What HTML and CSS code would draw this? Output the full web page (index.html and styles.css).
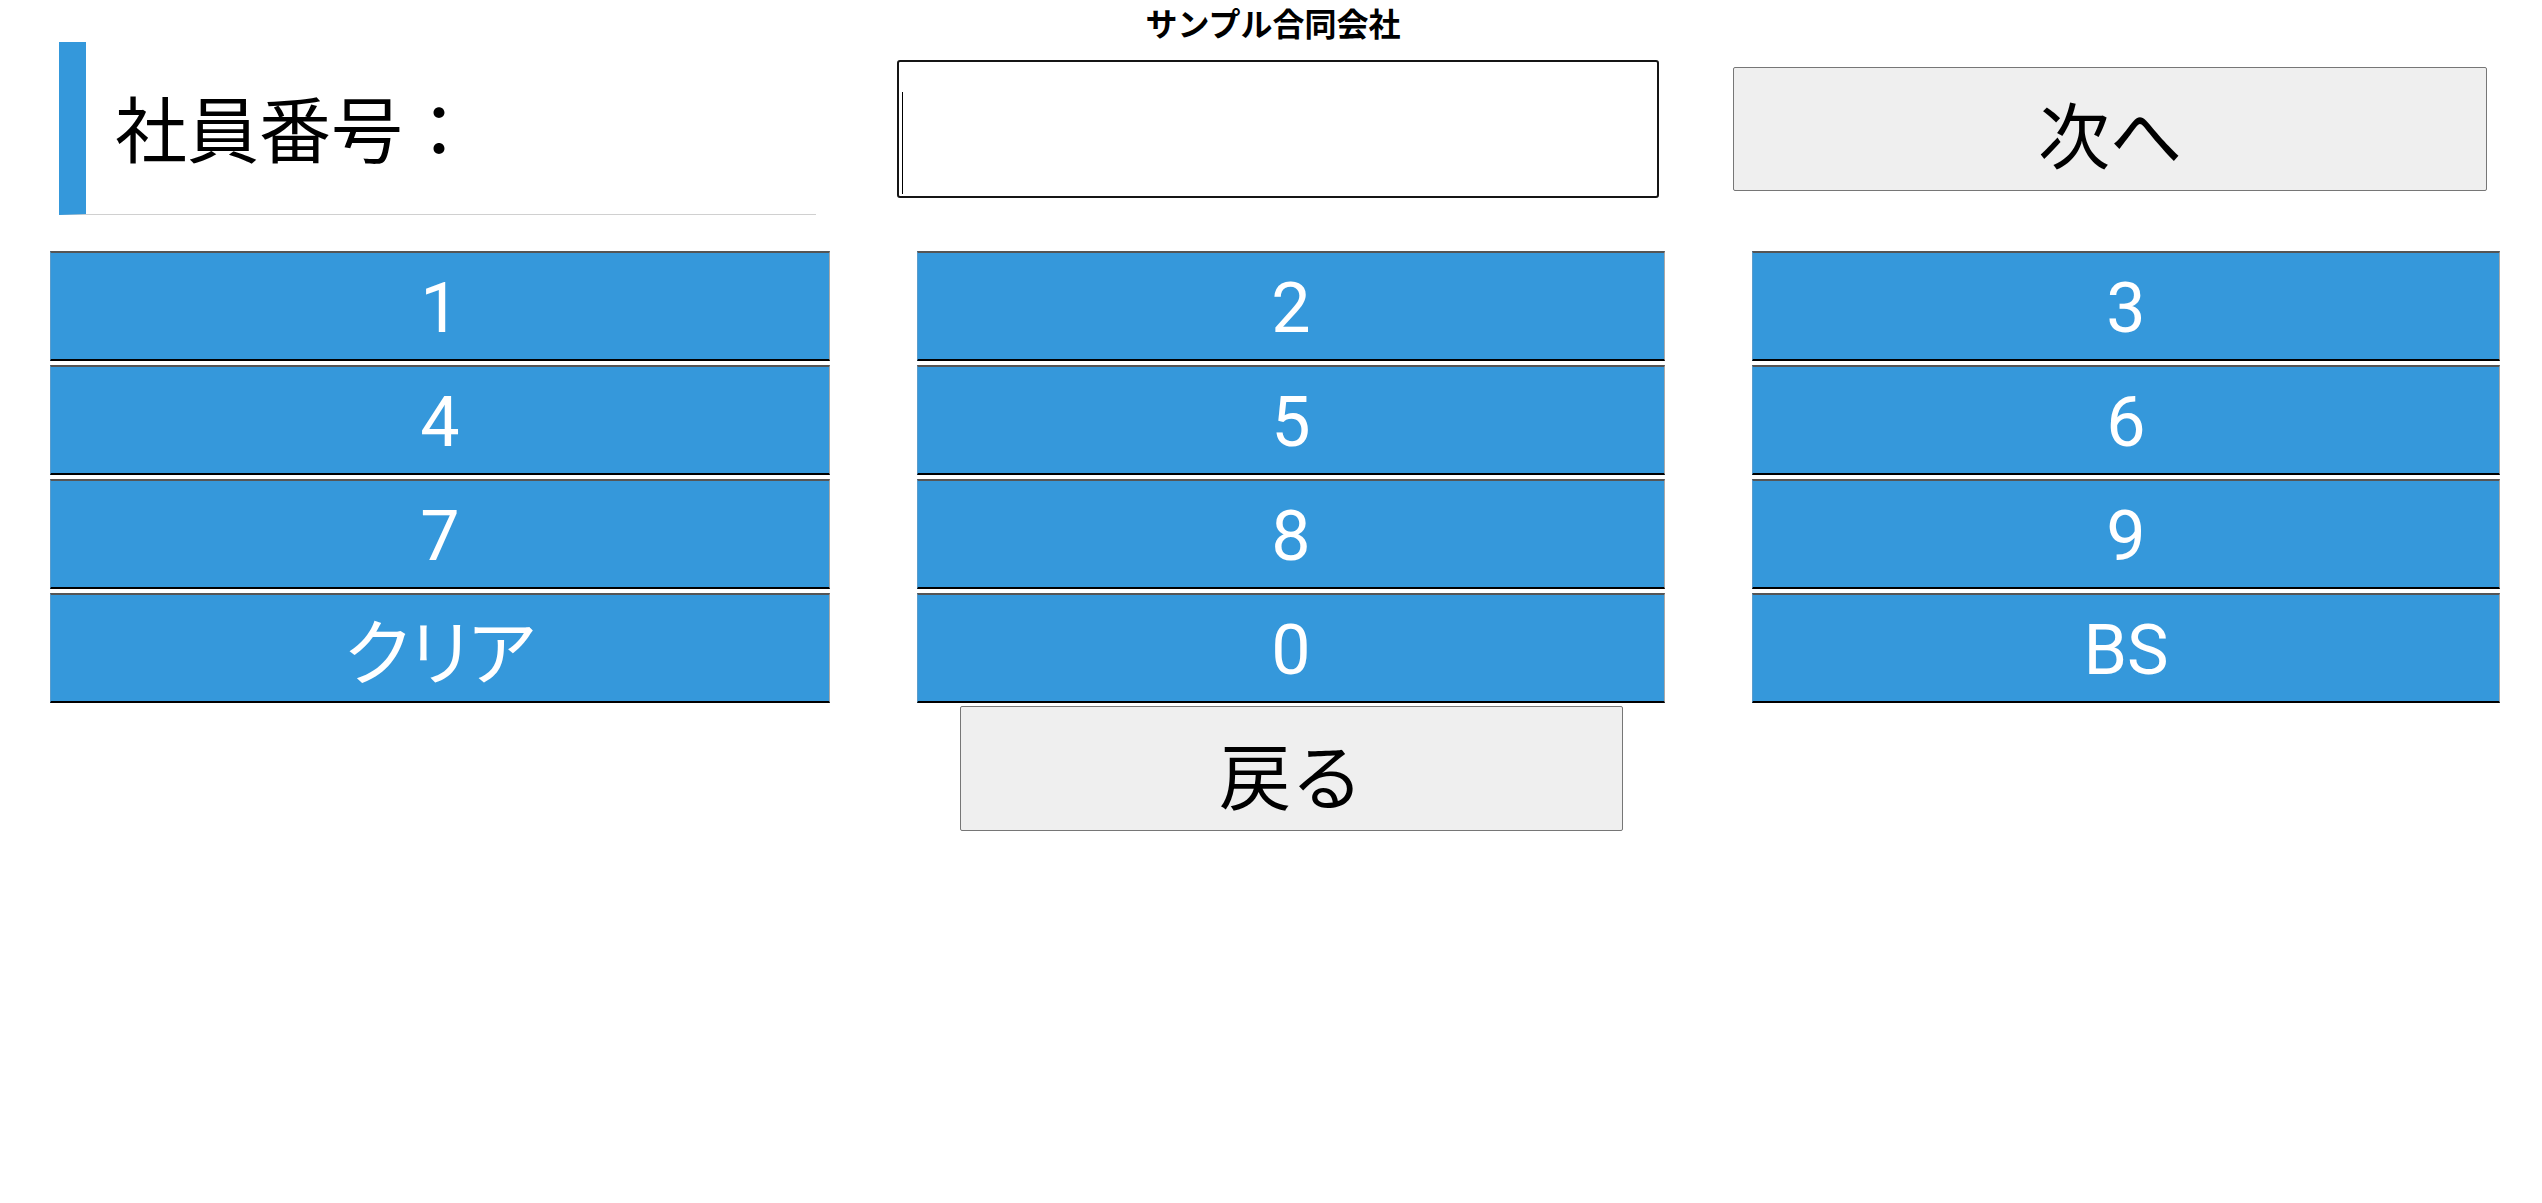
FILE: index.html
```html
<!DOCTYPE html>
<html lang="ja">
<head>
<meta charset="utf-8">
<title>社員番号</title>
<link rel="stylesheet" href="styles.css">
</head>
<body>
<div class="page">
  <div class="company">サンプル合同会社</div>
  <div class="header">
    <div class="label">社員番号：</div>
    <div class="field">
      <input class="code" type="text" value="">
      <span class="caret"></span>
    </div>
    <button class="btn next" type="button">次へ</button>
  </div>
  <div class="keypad">
    <button class="key" type="button">1</button>
    <button class="key" type="button">2</button>
    <button class="key" type="button">3</button>
    <button class="key" type="button">4</button>
    <button class="key" type="button">5</button>
    <button class="key" type="button">6</button>
    <button class="key" type="button">7</button>
    <button class="key" type="button">8</button>
    <button class="key" type="button">9</button>
    <button class="key kana" type="button">クリア</button>
    <button class="key" type="button">0</button>
    <button class="key" type="button">BS</button>
    <button class="btn back" type="button">戻る</button>
  </div>
</div>
</body>
</html>
```

FILE: styles.css
```css
html, body {
  margin: 0;
  padding: 0;
  background: #ffffff;
}

body {
  font-family: "Noto Sans CJK JP", "Noto Sans", sans-serif;
  color: #000000;
}

.page {
  width: 2542px;
}

.company {
  height: 42px;
  line-height: 44px;
  text-align: center;
  font-size: 32px;
  font-weight: 700;
  margin-left: 4px;
}

.header {
  display: flex;
  align-items: center;
  padding-left: 59px;
  height: 173px;
}

.label {
  box-sizing: border-box;
  width: 757px;
  height: 173px;
  border-left: 27px solid #3498db;
  border-bottom: 1px solid #d0d0d0;
  padding-left: 29px;
  padding-bottom: 4px;
  display: flex;
  align-items: center;
  font-size: 72px;
  line-height: 1;
}

.field {
  position: relative;
  margin-left: 81px;
  width: 762px;
  height: 138px;
}

.code {
  box-sizing: border-box;
  width: 100%;
  height: 100%;
  margin: 0;
  border: 2px solid #151515;
  border-radius: 3px;
  background: #ffffff;
  outline: none;
  padding: 0 4px;
  font-family: inherit;
  font-size: 72px;
}

.caret {
  position: absolute;
  left: 5px;
  top: 32px;
  width: 1px;
  height: 102px;
  background: #000000;
}

.btn {
  box-sizing: border-box;
  margin: 0;
  padding: 0;
  background: #efefef;
  border: 1px solid #767676;
  border-radius: 2px;
  font-family: inherit;
  font-size: 72px;
  line-height: 1;
  color: #000000;
}

.next {
  margin-left: 74px;
  width: 754px;
  height: 124px;
  padding-top: 6px;
}

.keypad {
  display: grid;
  grid-template-columns: 780px 748px 748px;
  grid-template-rows: repeat(4, 110px) 125px;
  column-gap: 87px;
  row-gap: 4px;
  padding-left: 50px;
  margin-top: 36px;
}

.key {
  box-sizing: border-box;
  margin: 0;
  padding: 4px 0 0 0;
  background: #3598db;
  color: #ffffff;
  border-top: 2px solid #555555;
  border-bottom: 2px solid #000000;
  border-left: 1px solid #5a9ccc;
  border-right: 1px solid #a8a8a8;
  border-radius: 0;
  font-family: Roboto, "Noto Sans CJK JP", sans-serif;
  font-size: 70px;
  line-height: 1;
}

.kana {
  padding-top: 0;
  font-family: "Noto Sans CJK JP", sans-serif;
  font-size: 72px;
  font-feature-settings: "palt";
}

.back {
  grid-column: 2;
  justify-self: center;
  width: 663px;
  height: 125px;
  margin-top: -1px;
  padding-top: 8px;
}
```
